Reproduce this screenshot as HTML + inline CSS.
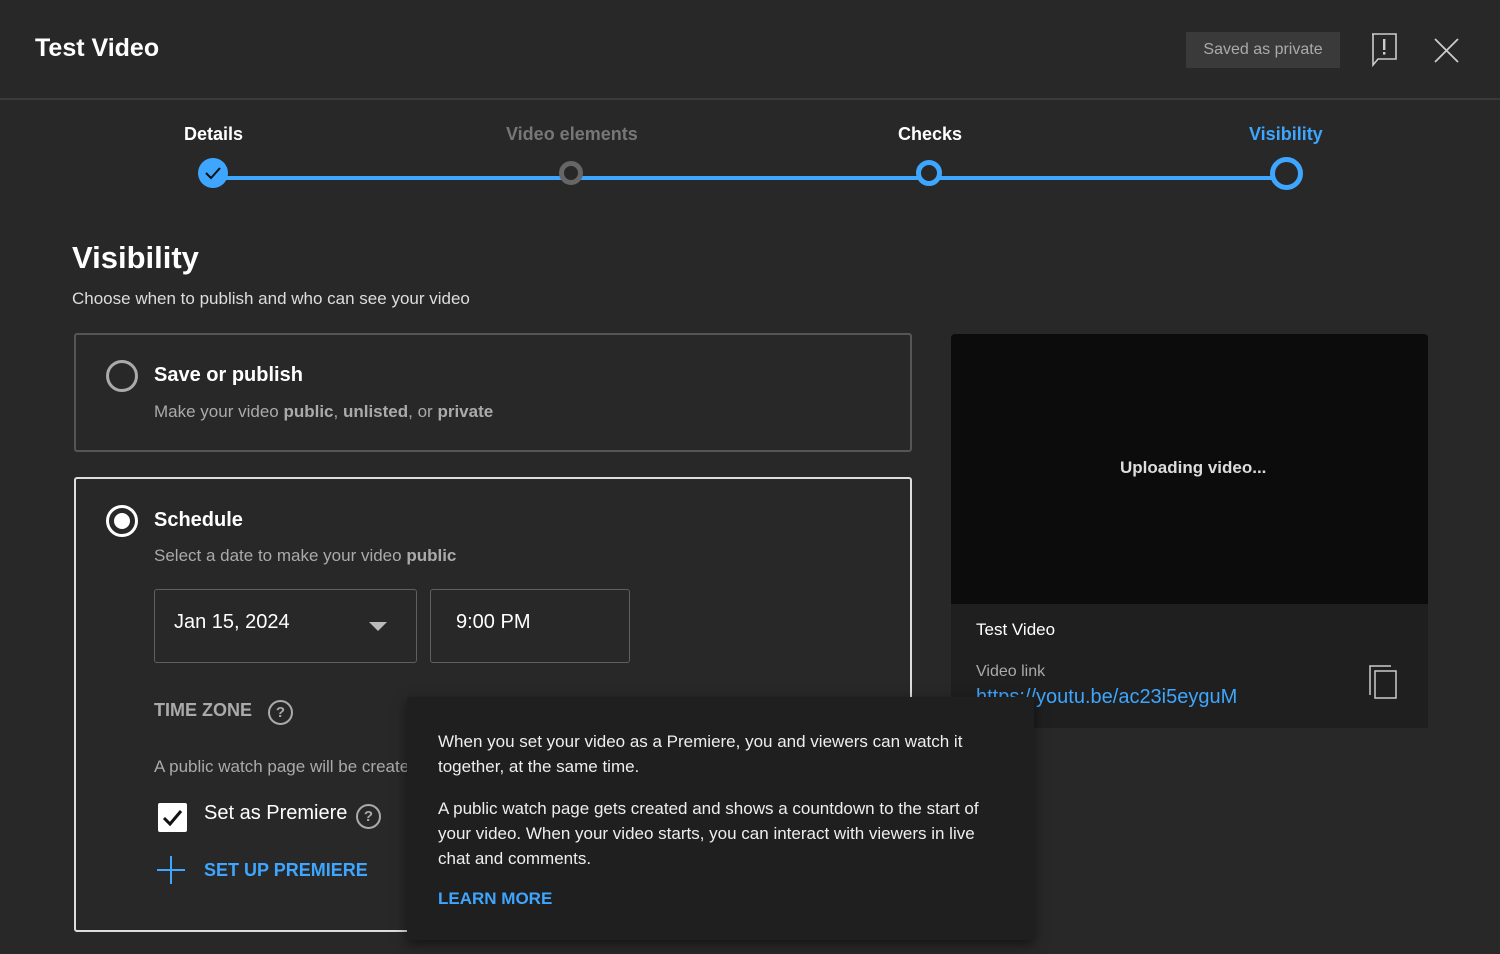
<!DOCTYPE html>
<html><head><meta charset="utf-8"><style>
*{margin:0;padding:0;box-sizing:border-box}
body{width:1500px;height:954px;background:#282828;font-family:"Liberation Sans",sans-serif;color:#fff;position:relative;overflow:hidden}
.a{position:absolute;white-space:nowrap}
.g{color:#aaa}
.blue{color:#3ea6ff}
</style></head><body>
<div class="a" style="left:35px;top:34px;font-size:25px;font-weight:bold">Test Video</div>
<div class="a" style="left:1186px;top:32px;width:154px;height:36px;background:#3a3a3a;color:#aaa;font-size:16px;line-height:36px;text-align:center">Saved as private</div>
<svg class="a" style="left:1370px;top:33px" width="28" height="34" viewBox="0 0 28 34"><path d="M2 1H26V26H8L3 32V1Z" fill="none" stroke="#ccc" stroke-width="1.6"/><rect x="13" y="6" width="2.4" height="11" fill="#ccc"/><rect x="13" y="19" width="2.4" height="2.6" fill="#ccc"/></svg>
<svg class="a" style="left:1434px;top:38px" width="25" height="25"><path d="M1 1L24 24M24 1L1 24" stroke="#ccc" stroke-width="1.8"/></svg>
<div class="a" style="left:0;top:98px;width:1500px;height:2px;background:#3a3a3a"></div>

<div class="a" style="left:213px;top:176px;width:1073px;height:4px;background:#3ea6ff"></div>
<div class="a" style="left:184px;top:124px;font-size:18px;font-weight:bold">Details</div>
<div class="a" style="left:506px;top:124px;font-size:18px;color:#777;font-weight:bold">Video elements</div>
<div class="a" style="left:898px;top:124px;font-size:18px;font-weight:bold">Checks</div>
<div class="a blue" style="left:1249px;top:124px;font-size:18px;font-weight:bold">Visibility</div>
<svg class="a" style="left:197px;top:157px" width="32" height="32"><circle cx="16" cy="16" r="15" fill="#3ea6ff"/><path d="M9 16L14 21L23 11" fill="none" stroke="#111" stroke-width="2"/></svg>
<div class="a" style="left:559px;top:161px;width:24px;height:24px;border-radius:50%;border:5px solid #666;background:#282828"></div>
<div class="a" style="left:916px;top:160px;width:26px;height:26px;border-radius:50%;border:5px solid #3ea6ff;background:#282828"></div>
<div class="a" style="left:1270px;top:157px;width:33px;height:33px;border-radius:50%;border:5px solid #3ea6ff;background:#282828"></div>

<div class="a" style="left:72px;top:240px;font-size:31px;font-weight:bold">Visibility</div>
<div class="a" style="left:72px;top:289px;font-size:17px;color:#ddd">Choose when to publish and who can see your video</div>

<div class="a" style="left:74px;top:333px;width:838px;height:119px;border:2px solid #555;border-radius:3px"></div>
<div class="a" style="left:106px;top:360px;width:32px;height:32px;border-radius:50%;border:3px solid #aaa"></div>
<div class="a" style="left:154px;top:364px;font-size:20px;font-weight:bold">Save or publish</div>
<div class="a g" style="left:154px;top:402px;font-size:17px">Make your video <b>public</b>, <b>unlisted</b>, or <b>private</b></div>

<div class="a" style="left:74px;top:477px;width:838px;height:455px;border:2px solid #ddd;border-radius:3px"></div>
<div class="a" style="left:106px;top:505px;width:32px;height:32px;border-radius:50%;border:3px solid #fff;padding:5px"><div style="width:16px;height:16px;border-radius:50%;background:#fff"></div></div>
<div class="a" style="left:154px;top:509px;font-size:20px;font-weight:bold">Schedule</div>
<div class="a g" style="left:154px;top:546px;font-size:17px">Select a date to make your video <b>public</b></div>
<div class="a" style="left:154px;top:589px;width:263px;height:74px;border:1px solid #606060;border-radius:3px"></div>
<div class="a" style="left:174px;top:611px;font-size:20px">Jan 15, 2024</div>
<div class="a" style="left:369px;top:622px;width:0;height:0;border-left:9px solid transparent;border-right:9px solid transparent;border-top:9px solid #bbb"></div>
<div class="a" style="left:430px;top:589px;width:200px;height:74px;border:1px solid #606060;border-radius:3px"></div>
<div class="a" style="left:456px;top:611px;font-size:20px">9:00 PM</div>
<div class="a g" style="left:154px;top:700px;font-size:18px;font-weight:bold">TIME ZONE</div>
<div class="a" style="left:268px;top:700px;width:25px;height:25px;border-radius:50%;border:2px solid #aaa;color:#aaa;font-size:15px;text-align:center;line-height:21px;font-weight:bold">?</div>
<div class="a g" style="left:154px;top:757px;font-size:17px">A public watch page will be created</div>
<div class="a" style="left:158px;top:803px;width:29px;height:29px;background:#fff;border-radius:2px"><svg width="29" height="29"><path d="M6 15L12 21L23 8" fill="none" stroke="#111" stroke-width="3"/></svg></div>
<div class="a" style="left:204px;top:802px;font-size:20px">Set as Premiere</div>
<div class="a" style="left:356px;top:804px;width:25px;height:25px;border-radius:50%;border:2px solid #aaa;color:#aaa;font-size:15px;text-align:center;line-height:21px;font-weight:bold">?</div>
<svg class="a" style="left:157px;top:856px" width="28" height="28"><path d="M14 0V28M0 14H28" stroke="#3ea6ff" stroke-width="2"/></svg>
<div class="a blue" style="left:204px;top:860px;font-size:18px;font-weight:bold">SET UP PREMIERE</div>

<div class="a" style="left:951px;top:334px;width:477px;height:270px;background:#0c0c0c;border-radius:4px 4px 0 0"></div>
<div class="a" style="left:951px;top:604px;width:477px;height:124px;background:#1f1f1f"></div>
<div class="a" style="left:1120px;top:458px;font-size:17px;color:#ddd;font-weight:bold">Uploading video...</div>
<div class="a" style="left:976px;top:620px;font-size:17px">Test Video</div>
<div class="a g" style="left:976px;top:663px;font-size:16px">Video link</div>
<div class="a blue" style="left:976px;top:686px;font-size:20px">https://youtu.be/ac23i5eyguM</div>
<svg class="a" style="left:1369px;top:665px" width="28" height="34"><path d="M1 30V1H22" fill="none" stroke="#ccc" stroke-width="1.5"/><rect x="6" y="6" width="21" height="27" fill="none" stroke="#ccc" stroke-width="1.5"/></svg>

<div class="a" style="left:407px;top:697px;width:627px;height:243px;background:#1f1f1f;box-shadow:0 4px 12px rgba(0,0,0,.5)"></div>
<div class="a" style="left:438px;top:729px;font-size:17px;line-height:25px;color:#eee">When you set your video as a Premiere, you and viewers can watch it<br>together, at the same time.</div>
<div class="a" style="left:438px;top:796px;font-size:17px;line-height:25px;color:#eee">A public watch page gets created and shows a countdown to the start of<br>your video. When your video starts, you can interact with viewers in live<br>chat and comments.</div>
<div class="a blue" style="left:438px;top:889px;font-size:17px;font-weight:bold">LEARN MORE</div>
</body></html>
